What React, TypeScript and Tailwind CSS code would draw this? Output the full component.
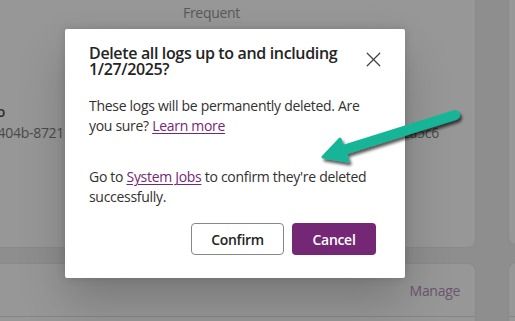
import { X } from 'lucide-react';

// Background page (dimmed by the modal overlay) with the delete-logs dialog on top.

const font = { fontFamily: '"Segoe UI", "Open Sans", "Noto Sans", sans-serif' };

const LogsPage = () => (
  <div className="flex flex-col gap-[15px]">
    <div className="flex h-[248px] gap-[32px]">
      <div className="-ml-[24px] w-[500px] shrink-0 rounded-b-[8px] border border-t-0 border-[#8a8a8a] bg-[#979797] text-[14px] leading-[20px] tracking-[-0.3px]">
        <div className="pl-[206px] pt-[3px] text-[#595959]">Frequent</div>
        <div className="mt-[79px] flex flex-col">
          <div className="flex">
            <div className="flex w-[28px] shrink-0 justify-end">
              <span className="whitespace-nowrap font-semibold text-[#2b2b2b]">Demo</span>
            </div>
          </div>
          <div className="mt-[1px] flex text-[#4a4a4a]">
            <div className="flex w-[87px] shrink-0 justify-end">
              <span className="whitespace-nowrap">9f1e-404b-8721</span>
            </div>
            <div className="w-[338px] shrink-0" />
            <span className="whitespace-nowrap">ea5c6</span>
          </div>
        </div>
      </div>
      <div className="h-[245px] w-[60px] shrink-0 rounded-b-[8px] border border-t-0 border-[#8a8a8a] bg-[#979797]" />
    </div>
    <div className="flex h-[80px] gap-[32px]">
      <div className="-ml-[24px] w-[500px] shrink-0 rounded-t-[8px] border border-b-0 border-[#8a8a8a] bg-[#979797]">
        <div className="flex h-[52px] items-center justify-end pr-[15px] text-[14px] tracking-[-0.3px] text-[#6c5470]">Manage</div>
        <div className="border-t border-[#858585]" />
      </div>
      <div className="mt-[-1px] w-[60px] shrink-0 rounded-t-[8px] border border-b-0 border-[#8a8a8a] bg-[#979797]">
        <div className="h-[53px]" />
        <div className="border-t border-[#858585]" />
      </div>
    </div>
  </div>
);

const DeleteLogsDialog = () => (
  <div className="absolute left-[65px] top-[29px] w-[340px] rounded-[2px] bg-white pb-[23px] pl-[24px] pr-[24px] pt-[16px] shadow-[0_0_8px_rgba(0,0,0,0.15),0_24px_48px_rgba(0,0,0,0.2)]">
    <div className="flex items-start justify-between gap-3">
      <h2 className="text-[16px] font-semibold leading-[16px] tracking-[-0.35px] text-[#242424]">
        Delete all logs up to and including 1/27/2025?
      </h2>
      <button className="mr-[-5px] mt-[2px] flex h-[25px] w-[25px] shrink-0 items-center justify-center text-[#424242]" aria-label="Close">
        <X size={25} strokeWidth={1.2} />
      </button>
    </div>
    <p className="mt-[19px] text-[14px] leading-[20px] tracking-[-0.3px] text-[#323130]">
      These logs will be permanently deleted. Are you sure?{' '}
      <a className="text-[#742774] underline underline-offset-2">Learn more</a>
    </p>
    <p className="mt-[31px] text-[14px] leading-[20px] tracking-[-0.3px] text-[#323130]">
      Go to <a className="text-[#742774] underline underline-offset-2">System Jobs</a> to confirm they're deleted successfully.
    </p>
    <div className="mr-[5px] mt-[16px] flex justify-end gap-2">
      <button className="h-[32px] w-[93px] rounded-[4px] border border-[#8a8886] bg-white text-[14px] font-semibold tracking-[-0.3px] text-[#242424]">
        Confirm
      </button>
      <button className="h-[32px] w-[84px] rounded-[4px] bg-[#742774] text-[14px] font-semibold tracking-[-0.3px] text-white">
        Cancel
      </button>
    </div>
  </div>
);

const Arrow = () => (
  <svg className="pointer-events-none absolute left-0 top-0" width="515" height="321" viewBox="0 0 515 321">
    <defs>
      <filter id="arrowShadow" x="-20%" y="-50%" width="140%" height="200%">
        <feDropShadow dx="2" dy="3" stdDeviation="1.6" floodColor="#000" floodOpacity="0.65" />
      </filter>
    </defs>
    <g filter="url(#arrowShadow)" fill="#15b597" stroke="#15b597">
      <line x1="455" y1="115" x2="340" y2="151" strokeWidth="10" strokeLinecap="round" />
      <polygon points="323,157 340,139 348,161" strokeWidth="3" strokeLinejoin="round" />
    </g>
  </svg>
);

export default function App() {
  return (
    <div className="relative h-[321px] w-[515px] overflow-hidden bg-[#8e8e8e]" style={font}>
      <LogsPage />
      <DeleteLogsDialog />
      <Arrow />
    </div>
  );
}
